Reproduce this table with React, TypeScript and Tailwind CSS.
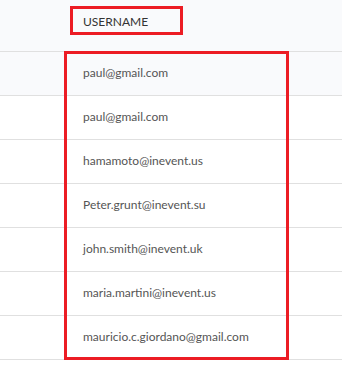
import React from 'react';

const users = [
    'paul@gmail.com',
    'paul@gmail.com',
    'hamamoto@inevent.us',
    'Peter.grunt@inevent.su',
    'john.smith@inevent.uk',
    'maria.martini@inevent.us',
    'mauricio.c.giordano@gmail.com',
];

export default function App() {
    return (
        <div className="relative w-[342px] h-[368px] bg-white overflow-hidden" style={{ fontFamily: 'Lato, "Open Sans", sans-serif' }}>
            {/* Header */}
            <div className="flex h-[52px] bg-[#f9fafc] border-b border-[#e0e0e0]">
                <div className="w-[64px] shrink-0" />
                <div className="flex items-center pl-[19px] pb-[8px] text-[12px] text-[#333]">USERNAME</div>
            </div>

            {users.map((u, i) => (
                <div key={i} className={`flex h-[44px] border-b border-[#e0e0e0] ${i === 0 ? 'bg-[#f9fafc]' : 'bg-white'}`}>
                    <div className="w-[64px] shrink-0" />
                    <div className="flex items-center pl-[19px] pb-[1px] text-[12px] text-[#555]">{u}</div>
                </div>
            ))}

            {/* Highlight overlays */}
            <div className="absolute left-[70px] top-[6px] w-[113px] h-[29px] border-[3px] border-[#ec1c24]" />
            <div className="absolute left-[64px] top-[51px] w-[225px] h-[309px] border-[3px] border-[#ec1c24]" />
        </div>
    );
}
